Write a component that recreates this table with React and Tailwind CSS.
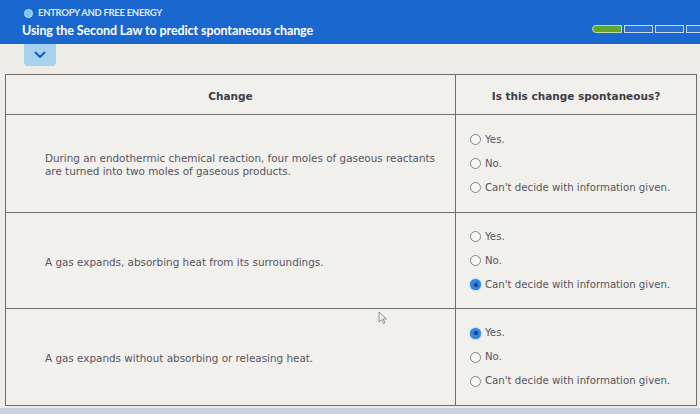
import React from 'react';

const rows = [
    {
        text: ['During an endothermic chemical reaction, four moles of gaseous reactants', 'are turned into two moles of gaseous products.'],
        selected: null,
        h: 'h-[98px]',
    },
    {
        text: ['A gas expands, absorbing heat from its surroundings.'],
        selected: 2,
        h: 'h-[96px]',
    },
    {
        text: ['A gas expands without absorbing or releasing heat.'],
        selected: 0,
        h: 'h-[96px]',
    },
];

const options = ['Yes.', 'No.', "Can't decide with information given."];

const Radio = ({ checked }) => (
    checked ? (
        <span className="w-[11px] h-[11px] rounded-full bg-[#2f86e0] flex items-center justify-center shadow-[0_0_2px_#5aa8f0]">
            <span className="w-[4px] h-[4px] rounded-full bg-[#0d3d80]" />
        </span>
    ) : (
        <span className="w-[11px] h-[11px] rounded-full border border-[#858585] bg-[#f7f7f4]" />
    )
);

const App = () => {
    return (
        <div className="relative w-[700px] h-[414px] overflow-hidden bg-[#eeede8] font-['DejaVu_Sans',sans-serif]">
            {/* Header */}
            <div className="h-[44px] bg-[#1a67cf] flex justify-between pl-[24px]">
                <div className="pt-[7px]">
                    <div className="flex items-center gap-[5px] h-[12px]">
                        <span className="w-[9px] h-[9px] rounded-full bg-[#7fc4f0] border border-[#b6e0f8]" />
                        <span className="font-['Lato',sans-serif] font-bold text-[9.5px] tracking-[-0.3px] text-[#dce9fa] uppercase">Entropy and free energy</span>
                    </div>
                    <div className="font-['Lato',sans-serif] font-bold text-[12.5px] text-white mt-[3px] -ml-[2px] tracking-[-0.1px]">Using the Second Law to predict spontaneous change</div>
                </div>
                <div className="flex gap-[2px] pt-[25px] -mr-[15px]">
                    <span className="w-[30px] h-[8px] rounded-l-[4px] bg-[#66a52c] border border-[#bfe0a8]" />
                    <span className="w-[29px] h-[8px] bg-[#2a6fd2] border border-[#c5d9f3]" />
                    <span className="w-[29px] h-[8px] bg-[#2a6fd2] border border-[#c5d9f3]" />
                    <span className="w-[29px] h-[8px] bg-[#2a6fd2] border border-[#c5d9f3]" />
                </div>
            </div>

            {/* Collapse tab */}
            <div className="ml-[24px] w-[32px] h-[22px] bg-[#a7d2ee] rounded-b-[4px] flex items-center justify-center">
                <svg width="12" height="8" viewBox="0 0 12 8" fill="none">
                    <path d="M1.5 1.5 L6 6 L10.5 1.5" stroke="#1a5fc0" strokeWidth="2" strokeLinecap="round" strokeLinejoin="round" />
                </svg>
            </div>

            {/* Table */}
            <div className="mt-[8px] ml-[5px] w-[692px] border border-[#6e6e6e] bg-[#f1f0ec]">
                <div className="flex h-[40px] border-b border-[#6e6e6e]">
                    <div className="w-[450px] border-r border-[#6e6e6e] flex items-center justify-center pt-[4px] text-[10.5px] font-bold text-[#3d3d48]">Change</div>
                    <div className="flex-1 flex items-center justify-center pt-[4px] text-[10.5px] font-bold text-[#3d3d48]">Is this change spontaneous?</div>
                </div>
                {rows.map((row, i) => (
                    <div key={i} className={`flex ${row.h} ${i < rows.length - 1 ? 'border-b border-[#6e6e6e]' : ''}`}>
                        <div className="w-[450px] border-r border-[#6e6e6e] flex flex-col justify-center pl-[39px] pt-[3px] text-[10.4px] leading-[13px] text-[#555560]">
                            {row.text.map((t, j) => <div key={j}>{t}</div>)}
                        </div>
                        <div className="flex-1 flex flex-col justify-center gap-[11px] pl-[14px]">
                            {options.map((o, k) => (
                                <div key={k} className="flex items-center gap-[4px] h-[13px] text-[10.2px] text-[#555560]">
                                    <Radio checked={row.selected === k} />
                                    <span>{o}</span>
                                </div>
                            ))}
                        </div>
                    </div>
                ))}
            </div>
            <div className="h-[10px] bg-[#c9d3df] mt-[2px]" />

            {/* Mouse cursor */}
            <svg className="absolute left-[378px] top-[311px]" width="10" height="14" viewBox="0 0 10 14">
                <path d="M1 1 L1 11 L3.5 8.5 L5.5 12.5 L7 11.8 L5 8 L8.5 8 Z" fill="#f4f4f4" stroke="#777" strokeWidth="0.8" strokeLinejoin="round" />
            </svg>
        </div>
    );
};

export default App;
